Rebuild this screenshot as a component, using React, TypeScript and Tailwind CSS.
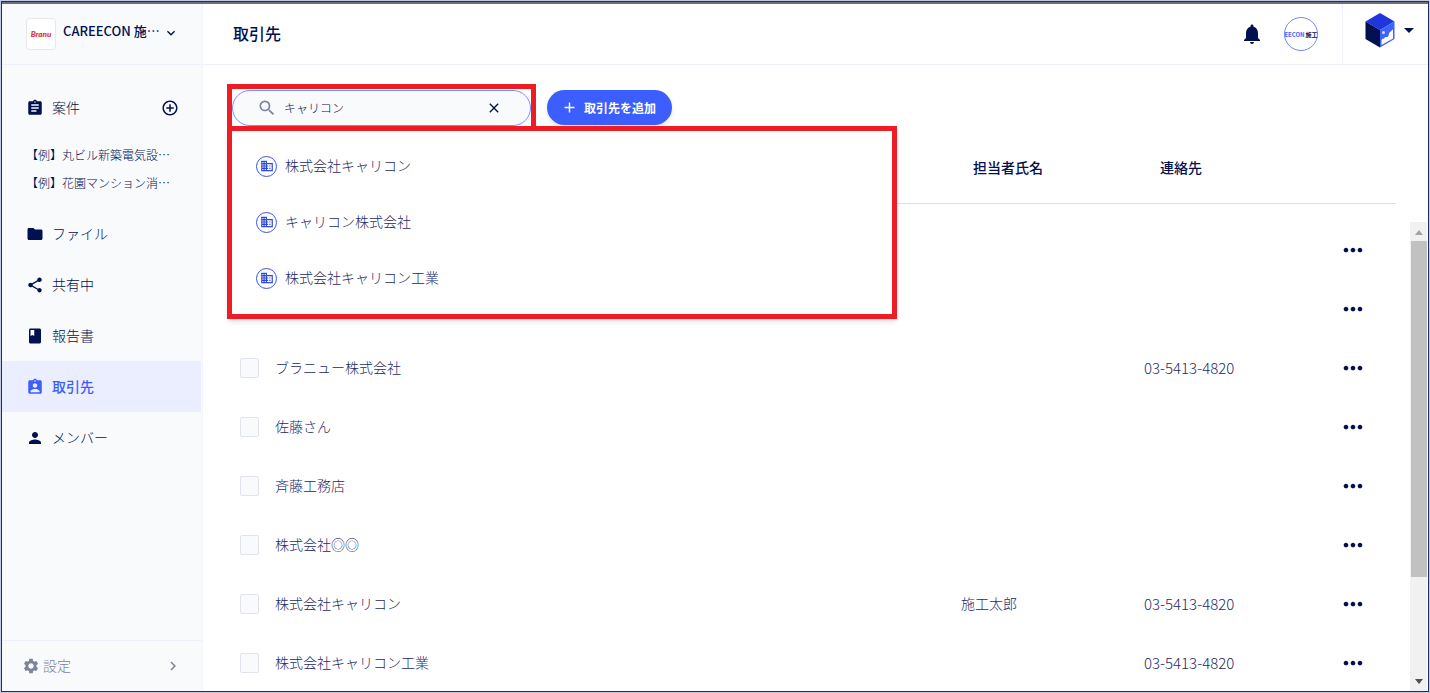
import React, { useState } from 'react';
import {
  MdAdd,
  MdAddCircleOutline,
  MdArrowDropDown,
  MdAssignment,
  MdAssignmentInd,
  MdBusiness,
  MdChevronRight,
  MdClass,
  MdClose,
  MdExpandMore,
  MdFolder,
  MdMoreHoriz,
  MdNotifications,
  MdPerson,
  MdSearch,
  MdSettings,
  MdShare
} from 'react-icons/md';

const projects = ['【例】丸ビル新築電気設…', '【例】花園マンション消…'];

const navItems = [
  { icon: MdFolder, label: 'ファイル', active: false },
  { icon: MdShare, label: '共有中', active: false },
  { icon: MdClass, label: '報告書', active: false },
  { icon: MdAssignmentInd, label: '取引先', active: true },
  { icon: MdPerson, label: 'メンバー', active: false }
];

const suggestions = ['株式会社キャリコン', 'キャリコン株式会社', '株式会社キャリコン工業'];

const clients = [
  { name: '', contact: '', phone: '' },
  { name: '', contact: '', phone: '' },
  { name: 'ブラニュー株式会社', contact: '', phone: '03-5413-4820' },
  { name: '佐藤さん', contact: '', phone: '' },
  { name: '斉藤工務店', contact: '', phone: '' },
  { name: '株式会社◎◎', contact: '', phone: '' },
  { name: '株式会社キャリコン', contact: '施工太郎', phone: '03-5413-4820' },
  { name: '株式会社キャリコン工業', contact: '', phone: '03-5413-4820' }
];

const CubeLogo = () => (
  <svg viewBox="0 0 30 36" className="h-9 w-[30px]" aria-hidden="true">
    <path d="M15 1 29.500 9.500 15 18 .5 9.500Z" fill="#1f36dc" />
    <path d="M.5 9.500 15 18V35.500L.5 27Z" fill="#02104f" />
    <path d="M29.500 9.500 15 18V35.500L29.500 27Z" fill="#3d63ff" />
    <path
      d="M16.500 33V28.500C17 26 18.500 27.500 19.500 26 20.500 24 21 25.500 22.500 25 24 24 23.500 21 25 20 26 19.500 26.500 19 27 18L28 17.500V26.500Z"
      fill="#fff"
    />
    <circle cx="18.500" cy="20.500" r="1.500" fill="#cfdcff" />
  </svg>
);

const Sidebar = () => (
  <aside className="flex w-[201px] shrink-0 flex-col border-r border-[#f3f5fb] bg-[#f8fafc]">
    <div className="flex h-[61px] shrink-0 items-center border-b border-[#eef1fc] pl-6">
      <div className="flex h-8 w-[30px] items-center justify-center rounded-sm border border-gray-200 bg-white font-['Lato','Liberation_Sans',sans-serif] text-[8px] font-black text-[#dc2f3c] italic">
        Branu
      </div>
      <button type="button" className="ml-[7px] flex items-center pb-1.5 text-[13px] font-medium">
        CAREECON 施…
        <MdExpandMore className="mt-1 ml-[3px] size-4" />
      </button>
    </div>

    <nav className="flex-1">
      <div className="mt-[18px] flex h-[50px] items-center justify-between pr-[23px] pl-6">
        <a href="#" className="flex items-center gap-2 text-sm font-light">
          <MdAssignment className="size-[18px]" />
          <span className="pb-0.5">案件</span>
        </a>
        <button type="button" aria-label="案件を追加">
          <MdAddCircleOutline className="size-[18px]" />
        </button>
      </div>
      <ul className="mt-2 mb-[11px] pl-6 text-xs leading-7 font-light">
        {projects.map((project) => (
          <li key={project}>
            <a href="#">{project}</a>
          </li>
        ))}
      </ul>
      {navItems.map((item) => (
        <a
          key={item.label}
          href="#"
          className={`mr-px flex h-[51px] items-center gap-2 pl-6 text-sm ${
            item.active ? 'bg-[#ebeeff] font-medium text-[#3d5eff]' : 'font-light'
          }`}
        >
          <item.icon className="size-[18px]" />
          <span className="pb-0.5">{item.label}</span>
        </a>
      ))}
    </nav>

    <a
      href="#"
      className="flex h-[51px] items-center border-t border-[#eef1fc] pr-5 pl-5 text-sm font-light text-[#7d839d]"
    >
      <MdSettings className="mr-[3px] size-[18px]" />
      <span className="pb-0.5">設定</span>
      <MdChevronRight className="ml-auto size-[18px]" />
    </a>
  </aside>
);

const Header = () => (
  <header className="flex h-[61px] shrink-0 items-center border-b border-[#eef1fc] pl-[30px]">
    <h1 className="pb-0.5 text-base font-medium">取引先</h1>
    <button type="button" aria-label="お知らせ" className="ml-auto">
      <MdNotifications className="size-6" />
    </button>
    <div className="mx-5 flex size-[34px] items-center justify-center rounded-full border border-[#6d88ff] text-[6px] font-bold whitespace-nowrap text-[#3d5eff]">
      EECON<span className="ml-px text-[#02104f]">施工</span>
    </div>
    <button
      type="button"
      aria-label="アカウント"
      className="ml-1 flex h-full items-center border-l border-[#eef1fc] pr-[7px] pb-2 pl-[22px]"
    >
      <CubeLogo />
      <MdArrowDropDown className="ml-0.5 size-6" />
    </button>
  </header>
);

const SearchBox = () => {
  const [query, setQuery] = useState('キャリコン');

  return (
    <div className="relative w-[309px]">
      <div className="h-[47px] overflow-hidden border-[5px] border-[#ee1c25] pt-px">
        <div className="flex h-9 items-center rounded-full border border-[#7891ff] bg-[#f8fafc] pr-7 pl-6">
          <MdSearch className="size-5 shrink-0 text-[#7d839d]" />
          <input
            type="text"
            aria-label="取引先を検索"
            value={query}
            onChange={(e) => setQuery(e.target.value)}
            className="ml-[7px] min-w-0 flex-1 bg-transparent text-xs font-light outline-none"
          />
          <button type="button" aria-label="クリア" onClick={() => setQuery('')}>
            <MdClose className="size-4" />
          </button>
        </div>
      </div>

      {/* Suggestions */}
      <ul className="absolute top-[42px] left-0 z-10 w-[670px] border-[5px] border-[#ee1c25] bg-white pt-[7px] pb-2 shadow-md">
        {suggestions.map((name) => (
          <li key={name}>
            <a href="#" className="flex h-[56px] items-center gap-2 pl-6 text-sm font-light text-[#1c2a66]">
              <span className="flex size-[21px] items-center justify-center rounded-full border border-[#3a55e6] text-[#2d49e0]">
                <MdBusiness className="size-3.5" />
              </span>
              <span className="pb-0.5">{name}</span>
            </a>
          </li>
        ))}
      </ul>
    </div>
  );
};

const ClientTable = () => (
  <table className="w-full table-fixed text-left text-sm">
    <colgroup>
      <col className="w-[43px]" />
      <col />
      <col className="w-[183px]" />
      <col className="w-[195px]" />
      <col className="w-[57px]" />
    </colgroup>
    <thead>
      <tr className="h-[72px] border-b border-[#dfe0e4]">
        <th></th>
        <th></th>
        <th className="pl-3 font-medium">担当者氏名</th>
        <th className="pl-4 font-medium">連絡先</th>
        <th></th>
      </tr>
    </thead>
    <tbody className="font-light text-[#1c2a66] before:block before:h-[17px] before:content-['']">
      {clients.map((client, index) => (
        <tr key={index} className="h-[59px]">
          <td className="pl-2">
            <input
              type="checkbox"
              aria-label={client.name || '取引先を選択'}
              className="block h-5 w-[19px] appearance-none rounded-xs border border-[#e1e4ec] bg-[#f8fafc] checked:bg-[#3d5eff]"
            />
          </td>
          <td className="pb-0.5">{client.name}</td>
          <td className="pb-0.5">{client.contact}</td>
          <td className="text-[15px]">{client.phone}</td>
          <td>
            <button type="button" aria-label="メニュー" className="block text-[#02104f]">
              <MdMoreHoriz className="size-7" />
            </button>
          </td>
        </tr>
      ))}
    </tbody>
  </table>
);

const ScrollBar = () => (
  <div aria-hidden="true" className="mt-[91px] mr-px flex w-[17px] shrink-0 flex-col items-center bg-[#f1f1f1]">
    <svg viewBox="0 0 17 19" className="h-[19px] w-[17px] shrink-0">
      <path d="M5 13 9 8 13 13Z" fill="#a3a3a3" />
    </svg>
    <div className="w-4 flex-[335] bg-[#c1c1c1]" />
    <div className="flex-[97]" />
    <svg viewBox="0 0 17 17" className="h-[17px] w-[17px] shrink-0">
      <path d="M5 5H13L9 10Z" fill="#505050" />
    </svg>
  </div>
);

const App = () => {
  return (
    <div className="h-screen bg-[#c3cbe2] p-px font-['Noto_Sans_CJK_JP',sans-serif] text-[#02104f]">
      <div className="flex h-full flex-col overflow-hidden border border-[#1f2d6b] bg-white">
        <div className="h-0.5 shrink-0 bg-[#6b6e7c]" />
        <div className="flex min-h-0 flex-1">
          <Sidebar />
          <div className="flex min-w-0 flex-1 flex-col">
            <Header />
            <main className="flex min-h-0 flex-1 flex-col pt-[19px]">
              <div className="flex items-center gap-[11px] pl-6">
                <SearchBox />
                <button
                  type="button"
                  className="flex h-[35px] items-center gap-1.5 rounded-full bg-[#3d5eff] pr-4 pl-3.5 text-xs font-bold text-white shadow-md"
                >
                  <MdAdd className="size-[17px]" />
                  取引先を追加
                </button>
              </div>
              <div className="flex min-h-0 flex-1 pl-[29px]">
                <div className="mr-3.5 min-w-0 flex-1 overflow-hidden">
                  <ClientTable />
                </div>
                <ScrollBar />
              </div>
            </main>
          </div>
        </div>
      </div>
    </div>
  );
};

export default App;
